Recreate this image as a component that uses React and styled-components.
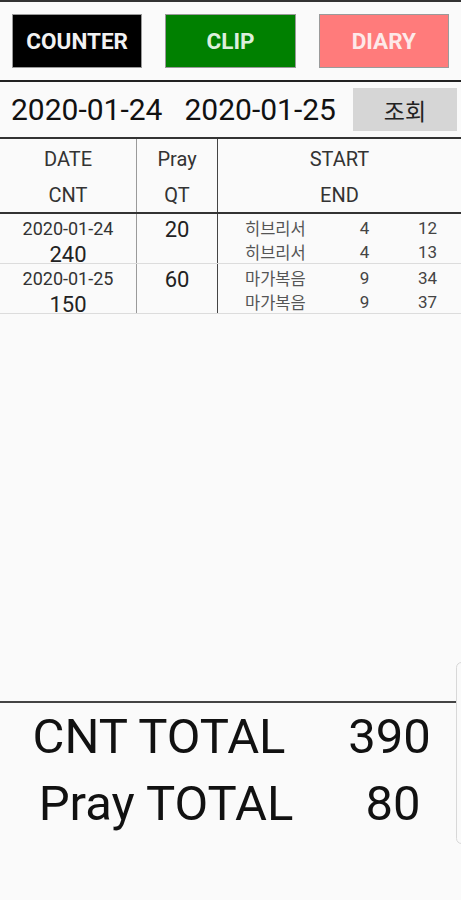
import React from "react";
import styled, { createGlobalStyle } from "styled-components";

const Global = createGlobalStyle`
  html, body { margin: 0; padding: 0; background: #fafafa; }
  body { font-family: Roboto, "Noto Sans CJK KR", sans-serif; overflow: hidden; }
  * { box-sizing: border-box; }
`;

const Screen = styled.div`
  position: relative;
  height: 900px;
  display: flex;
  flex-direction: column;
  background: #fafafa;
  border-top: 2px solid #333;
`;

const TabBar = styled.div`
  display: flex;
  gap: 23px;
  padding: 12px 12px;
  border-bottom: 2px solid #222;
`;

const TabButton = styled.button`
  flex: 1;
  height: 54px;
  border: 1px solid #9a9a9a;
  background: ${(p) => p.$bg};
  color: ${(p) => p.$fg};
  font-family: Roboto, sans-serif;
  font-weight: 700;
  font-size: 22.5px;
  padding: 0;
  margin: 0;
`;

const DateBar = styled.div`
  height: 57px;
  display: flex;
  align-items: center;
  padding-left: 11px;
  border-bottom: 2px solid #333;
`;

const DateGroup = styled.div`
  display: flex;
  gap: 22px;
`;

const DateText = styled.span`
  flex-shrink: 0;
  white-space: nowrap;
  font-size: 30px;
  color: #111;
`;

const SearchButton = styled.button`
  flex-shrink: 0;
  margin-left: auto;
  margin-right: 4px;
  width: 104px;
  height: 43px;
  border: none;
  background: #d6d6d6;
  font-family: "Noto Sans CJK KR", sans-serif;
  font-size: 23px;
  color: #222;
  padding: 0;
`;

const TableArea = styled.div`
  flex: 1;
`;

const Row = styled.div`
  display: grid;
  grid-template-columns: 137px 81px 1fr;
  height: ${(p) => p.$h}px;
  border-bottom: ${(p) => p.$line};
  overflow: hidden;
`;

const Cell = styled.div`
  border-right: ${(p) => p.$line || "none"};
  text-align: center;
  overflow: hidden;
  padding-top: ${(p) => p.$pt || 0}px;
`;

const HeadLine = styled.div`
  font-size: 20px;
  line-height: 36px;
  color: #333;
`;

const DateLine = styled.div`
  font-size: 18px;
  line-height: 25px;
  color: #333;
`;

const BigNum = styled.div`
  font-size: ${(p) => p.$size}px;
  line-height: ${(p) => p.$lh}px;
  color: #222;
`;

const BookLine = styled.div`
  display: grid;
  grid-template-columns: 90px 59px 1fr;
  padding-left: 27px;
  height: 24px;
  line-height: 24px;
  font-size: 17px;
  color: #444;
  text-align: center;
`;

const BookName = styled.span`
  text-align: left;
  font-family: "Noto Sans CJK KR", sans-serif;
  font-size: 16.5px;
  color: #555;
`;

const Totals = styled.div`
  border-top: 2px solid #444;
  height: 199px;
`;

const TotalRow = styled.div`
  display: grid;
  grid-template-columns: 318px 1fr;
  padding-left: ${(p) => p.$shift}px;
  height: 67px;
  line-height: 67px;
  font-size: 49px;
  color: #111;
  text-align: center;
  white-space: nowrap;
`;

const ScrollThumb = styled.div`
  position: absolute;
  right: -6px;
  top: 660px;
  width: 11px;
  height: 182px;
  border: 1px solid #d8d8d8;
  border-radius: 6px;
  background: #fafafa;
`;

const data = [
  {
    date: "2020-01-24",
    cnt: 240,
    qt: 20,
    books: [
      ["히브리서", 4, 12],
      ["히브리서", 4, 13],
    ],
  },
  {
    date: "2020-01-25",
    cnt: 150,
    qt: 60,
    books: [
      ["마가복음", 9, 34],
      ["마가복음", 9, 37],
    ],
  },
];

export default function App() {
  return (
    <>
      <Global />
      <Screen>
        <TabBar>
          <TabButton $bg="#000" $fg="#f2f2f2">COUNTER</TabButton>
          <TabButton $bg="#008000" $fg="#dcefdc">CLIP</TabButton>
          <TabButton $bg="#ff7b7b" $fg="#fde9e9">DIARY</TabButton>
        </TabBar>
        <DateBar>
          <DateGroup>
            <DateText>2020-01-24</DateText>
            <DateText>2020-01-25</DateText>
          </DateGroup>
          <SearchButton>조회</SearchButton>
        </DateBar>
        <TableArea>
          <Row $h={75} $line="2px solid #333">
            <Cell $line="1px solid #9a9a9a" $pt={2}>
              <HeadLine>DATE</HeadLine>
              <HeadLine>CNT</HeadLine>
            </Cell>
            <Cell $line="1px solid #444" $pt={2}>
              <HeadLine>Pray</HeadLine>
              <HeadLine>QT</HeadLine>
            </Cell>
            <Cell $pt={2}>
              <HeadLine>START</HeadLine>
              <HeadLine>END</HeadLine>
            </Cell>
          </Row>
          {data.map((r) => (
            <Row key={r.date} $h={50} $line="1px solid #dcdcdc">
              <Cell $line="1px solid #9a9a9a" $pt={2}>
                <DateLine>{r.date}</DateLine>
                <BigNum $size={22} $lh={27}>{r.cnt}</BigNum>
              </Cell>
              <Cell $line="1px solid #444" $pt={2}>
                <BigNum $size={22} $lh={28}>{r.qt}</BigNum>
              </Cell>
              <Cell $pt={2}>
                {r.books.map((b, i) => (
                  <BookLine key={i}>
                    <BookName>{b[0]}</BookName>
                    <span>{b[1]}</span>
                    <span>{b[2]}</span>
                  </BookLine>
                ))}
              </Cell>
            </Row>
          ))}
        </TableArea>
        <Totals>
          <TotalRow $shift={0}>
            <span>CNT TOTAL</span>
            <span>390</span>
          </TotalRow>
          <TotalRow $shift={7}>
            <span>Pray TOTAL</span>
            <span>80</span>
          </TotalRow>
        </Totals>
        <ScrollThumb />
      </Screen>
    </>
  );
}
